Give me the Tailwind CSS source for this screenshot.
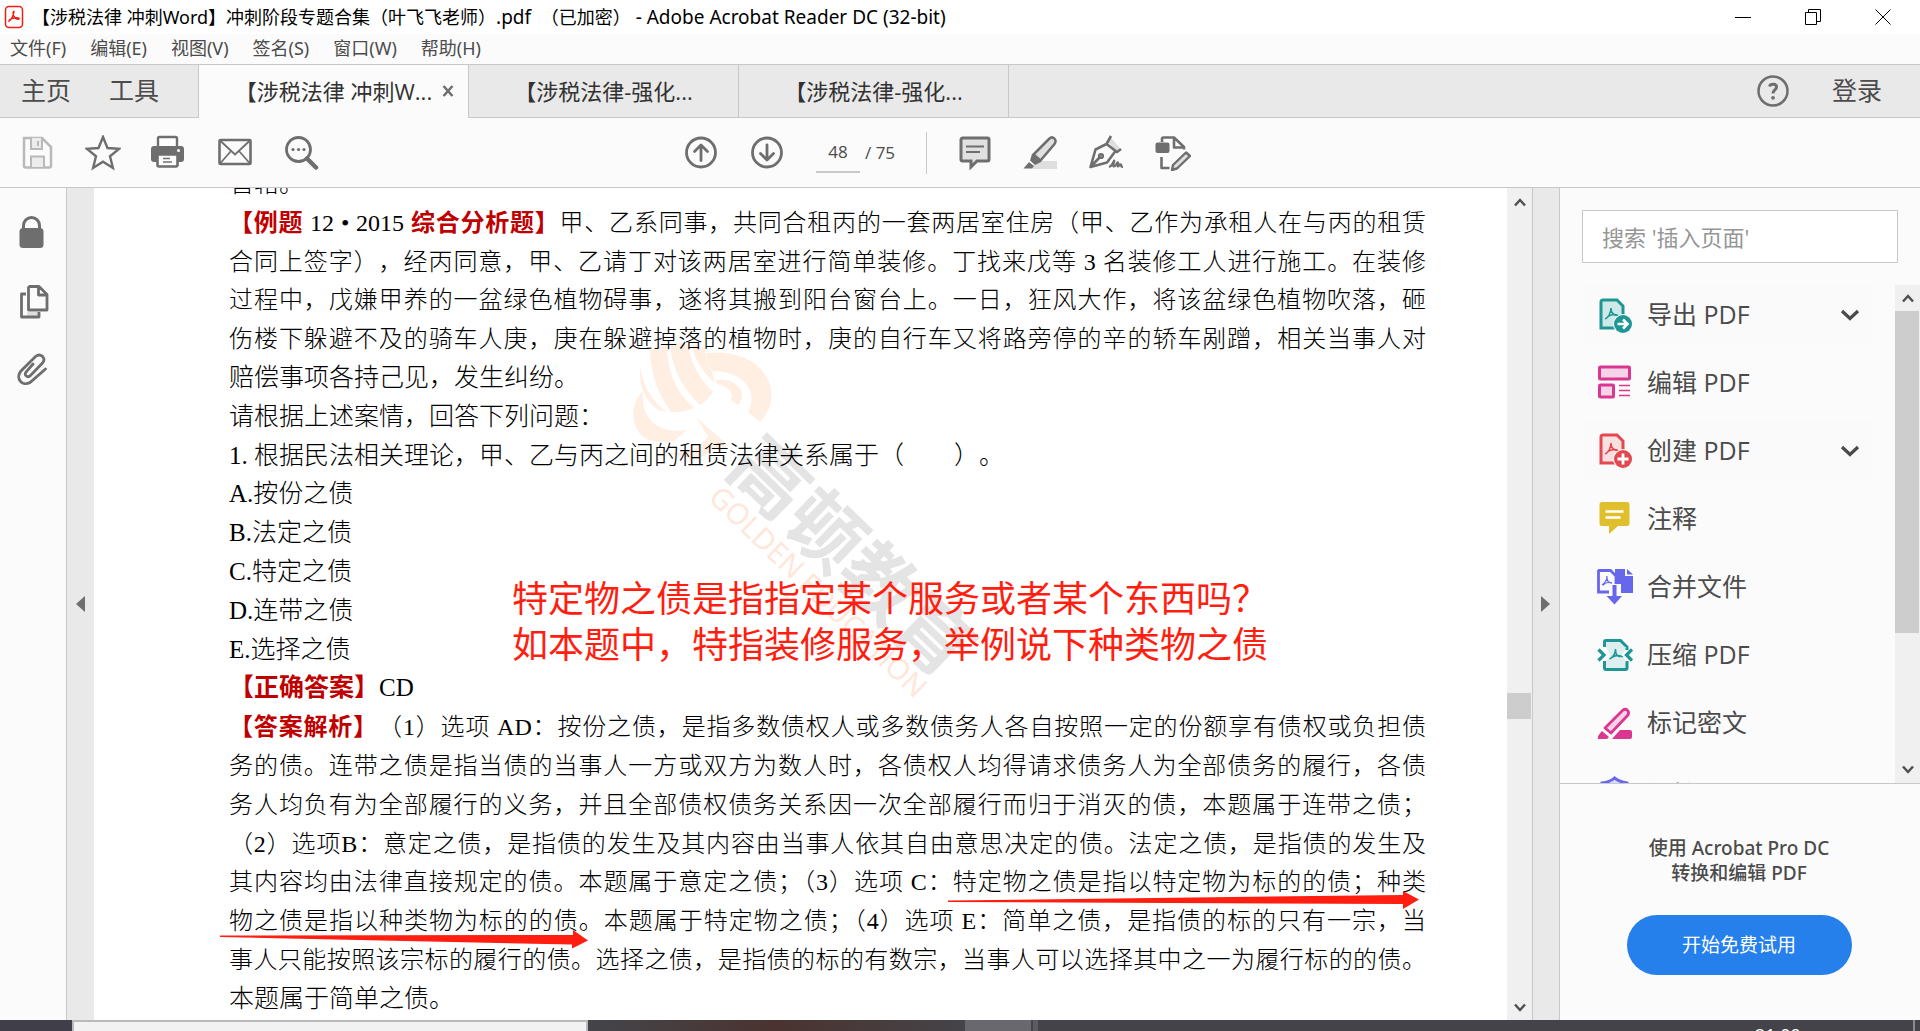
<!DOCTYPE html>
<html lang="zh-CN">
<head>
  <meta charset="UTF-8" />
  <meta name="viewport" content="width=device-width, initial-scale=1.0" />
  <title>Adobe Acrobat Reader DC (32-bit)</title>
  <script src="https://cdn.jsdelivr.net/npm/@tailwindcss/browser@4"></script>
</head>
<body class="h-screen flex flex-col overflow-hidden bg-[#fbfbfb] text-[#4b4b4b] font-['Open_Sans','Noto_Sans_CJK_SC',sans-serif]">

  <!-- Title bar -->
  <header class="h-[34px] shrink-0 flex items-center bg-white text-black">
    <svg class="ml-1 w-5 h-6 shrink-0" viewBox="0 0 20 24" fill="none" stroke="#f01e14">
      <rect x="1.5" y="1.5" width="17" height="21" rx="3.5" stroke-width="1.5" />
      <path d="M5 16c2-1 4.500-5 5-9.500c-1.500 0-1 3.500 0.500 5.500c1.500 2 3.500 3 4.500 2s-2-1.500-4.500-1s-5.500 1.500-5.500 3z" stroke-width="1.400" />
    </svg>
    <h1 class="ml-2 flex-1 text-[18px] whitespace-pre font-['Noto_Sans','Noto_Sans_CJK_SC',sans-serif]">【涉税法律 冲刺Word】冲刺阶段专题合集（叶飞飞老师）<span class="text-[19px]">.pdf </span> （已加密）<span class="text-[19px]"> - Adobe Acrobat Reader DC (32-bit)</span></h1>
    <div class="flex pr-[2px]">
      <button aria-label="最小化" class="w-[70px] h-[34px] flex items-center justify-center">
        <svg class="w-4 h-4" viewBox="0 0 16 16" stroke="#000"><path d="M0 8.500h16" /></svg>
      </button>
      <button aria-label="还原" class="w-[70px] h-[34px] flex items-center justify-center">
        <svg class="w-4 h-4" viewBox="0 0 16 16" fill="none" stroke="#000"><path d="M0.500 3.500h11v12h-11zM3.500 3.500v-3h12v12h-4" /></svg>
      </button>
      <button aria-label="关闭" class="w-[70px] h-[34px] flex items-center justify-center">
        <svg class="w-4 h-4" viewBox="0 0 16 16" stroke="#000"><path d="M0.500 0.500l15 15M15.500 0.500l-15 15" /></svg>
      </button>
    </div>
  </header>

  <!-- Menu -->
  <nav class="h-[30px] shrink-0 flex items-center gap-6 pl-[10px] text-[18px] leading-7 pb-[2px] font-['Noto_Sans','Noto_Sans_CJK_SC',sans-serif]">
    <button>文件(F)</button>
    <button>编辑(E)</button>
    <button>视图(V)</button>
    <button>签名(S)</button>
    <button>窗口(W)</button>
    <button>帮助(H)</button>
  </nav>

  <!-- Tabs -->
  <div class="h-[54px] shrink-0 flex bg-[#e9e9e9] border-t border-[#c8c8c8]">
    <div class="w-[199px] flex items-center gap-[38px] pl-[21px] text-[25px] border-r border-b border-[#c8c8c8]">
      <button>主页</button>
      <button>工具</button>
    </div>
    <div class="relative w-[269px] flex items-center justify-center bg-[#fbfbfb] text-[22px] text-[#323232]">
      <span class="whitespace-nowrap">【涉税法律 冲刺W...</span>
      <button aria-label="关闭标签" class="absolute right-3 top-[18px]">
        <svg class="w-4 h-4" viewBox="0 0 16 16" stroke="#6e6e6e" stroke-width="2.500"><path d="M3.500 3l9 10M12.500 3l-9 10" /></svg>
      </button>
    </div>
    <button class="w-[271px] border-x border-b border-[#c8c8c8] text-[22px] text-[#323232]">【涉税法律-强化...</button>
    <button class="w-[270px] border-r border-b border-[#c8c8c8] text-[22px] text-[#323232]">【涉税法律-强化...</button>
    <div class="flex-1 flex items-center justify-end gap-[43px] pr-[38px] border-b border-[#c8c8c8] text-[25px]">
      <button aria-label="帮助">
        <svg class="w-8 h-8" viewBox="0 0 32 32" fill="none" stroke="#6e6e6e">
          <circle cx="16" cy="16" r="14.500" stroke-width="2.500" />
          <path d="M12.500 11.500c1-3 7-3 7 0.500c0 3-3.500 3-3.500 6.500" stroke-width="3" />
          <circle cx="16" cy="22.800" r="1.900" fill="#6e6e6e" stroke="none" />
        </svg>
      </button>
      <button>登录</button>
    </div>
  </div>

  <!-- Toolbar -->
  <div class="h-[70px] shrink-0 flex items-center border-b border-[#c8c8c8]">
    <div class="w-[684px] flex items-center gap-[30px] pl-[19px]">
      <button aria-label="保存">
        <svg class="w-9 h-9" viewBox="0 0 36 36" fill="none" stroke="#b9b9b9" stroke-width="2.500">
          <path d="M5 3h18l9 9v19a1.500 1.500 0 0 1-1.500 1.500h-24a1.500 1.500 0 0 1-1.500-1.500z" />
          <path d="M12 3v11h11V3M19 6v5M12 32V21.500h13V32" fill="#ececec" stroke-width="2" />
        </svg>
      </button>
      <button aria-label="收藏">
        <svg class="w-9 h-9" viewBox="0 0 36 36" fill="none" stroke="#6e6e6e" stroke-width="2.400">
          <path d="M18 2l4.500 11l11.500 0.800l-9 7.500l2.900 11.700L18 26.700l-9.900 6.300l2.900-11.700l-9-7.500L13.500 13z" />
        </svg>
      </button>
      <button aria-label="打印">
        <svg class="w-9 h-9" viewBox="0 0 36 36">
          <path d="M7 12V3.500A1.500 1.500 0 0 1 8.500 2h16A1.500 1.500 0 0 1 26 3.500V12" fill="#fff" stroke="#6e6e6e" stroke-width="2.400" />
          <rect x="0" y="11" width="33" height="16" rx="3" fill="#6e6e6e" />
          <circle cx="27.500" cy="15.500" r="1.500" fill="#fff" />
          <path d="M6.500 19.500h20V30a1.500 1.500 0 0 1-1.500 1.500H8A1.500 1.500 0 0 1 6.500 30z" fill="#fff" stroke="#6e6e6e" stroke-width="2.600" />
          <path d="M12 23.500h7M12 27h9" stroke="#6e6e6e" stroke-width="1.600" />
        </svg>
      </button>
      <button aria-label="邮件">
        <svg class="w-9 h-9" viewBox="0 0 36 36" fill="none" stroke="#6e6e6e">
          <rect x="2.500" y="5" width="31" height="24" rx="1" stroke-width="2.600" />
          <path d="M3.500 6L18 19.500L32.500 6M3.500 28L14 16M32.500 28L22 16" stroke-width="1.800" />
        </svg>
      </button>
      <button aria-label="查找">
        <svg class="w-9 h-9" viewBox="0 0 36 36" fill="none" stroke="#6e6e6e">
          <circle cx="15.500" cy="14.500" r="12" stroke-width="2.800" />
          <path d="M24 23.500l9 9" stroke-width="4.500" stroke-linecap="round" />
          <g fill="#6e6e6e" stroke="none"><circle cx="10" cy="14.500" r="1.600" /><circle cx="15.500" cy="14.500" r="1.600" /><circle cx="21" cy="14.500" r="1.600" /></g>
        </svg>
      </button>
    </div>
    <div class="flex items-center gap-8">
      <button aria-label="上一页">
        <svg class="w-[34px] h-[34px]" viewBox="0 0 34 34" fill="none" stroke="#6e6e6e" stroke-width="2.800" stroke-linecap="round" stroke-linejoin="round">
          <circle cx="17" cy="16.500" r="14.500" /><path d="M17 24.500V10M10.500 15.500L17 9L23.500 15.500" />
        </svg>
      </button>
      <button aria-label="下一页">
        <svg class="w-[34px] h-[34px]" viewBox="0 0 34 34" fill="none" stroke="#6e6e6e" stroke-width="2.800" stroke-linecap="round" stroke-linejoin="round">
          <circle cx="17" cy="16.500" r="14.500" /><path d="M17 9v15M10.500 17.500l6.500 6.500L23.500 17.500" />
        </svg>
      </button>
      <div class="flex items-center text-[17px]">
        <input aria-label="页码" value="48" class="w-[44px] h-10 text-center border-b-2 border-[#c8c8c8]" />
        <span class="ml-[5px] whitespace-nowrap">/ 75</span>
      </div>
    </div>
    <div class="ml-[31px] w-px h-[42px] bg-[#c8c8c8]"></div>
    <div class="ml-[30px] flex items-center gap-[30px]">
      <button aria-label="附注">
        <svg class="w-9 h-9" viewBox="0 0 36 36" fill="#e0e0e0" stroke="#6e6e6e">
          <path d="M5.500 3h25A1.500 1.500 0 0 1 32 4.500v20a1.500 1.500 0 0 1-1.500 1.500H20l-6 6V26H5.500A1.500 1.500 0 0 1 4 24.500v-20A1.500 1.500 0 0 1 5.500 3z" stroke-width="3" />
          <path d="M9 11.500h18M9 17h14" stroke-width="1.800" />
        </svg>
      </button>
      <button aria-label="高亮">
        <svg class="w-9 h-9" viewBox="0 0 36 36">
          <path d="M14 26h20v8H8z" fill="#dedede" />
          <path d="M26.500 3.500c3-3 8 1 5 5.500L17.500 25.500l-7-6z" fill="#e0e0e0" stroke="#6e6e6e" stroke-width="2.500" />
          <path d="M9 19l9 8l-6 3l-5-4.500zM6 27l5 4l-2 2.500H0.500z" fill="#6e6e6e" />
        </svg>
      </button>
      <button aria-label="签名">
        <svg class="w-9 h-9" viewBox="0 0 36 36" fill="none" stroke="#6e6e6e" stroke-width="2.600" stroke-linejoin="round">
          <path d="M22 3l9 10l-4 3l-8-9z" fill="#dedede" stroke="none" />
          <path d="M22 1l-4.500 8L28 17l4-3M17.500 9L6.500 14.500L1.500 32l16.500-4.500L26.500 16M1.500 32L11 22" />
          <circle cx="12" cy="21" r="1.800" />
          <path d="M20 32c3-1 5-6 5-6.500c1 0-2 6 0 6s3-5 4-4s-1 4 0 4s2-3 3-2s-1 2.500 2 2.500" stroke-width="2.200" />
        </svg>
      </button>
      <button aria-label="更多工具">
        <svg class="w-9 h-9" viewBox="0 0 36 36" fill="none" stroke="#6e6e6e" stroke-width="2.600" stroke-linejoin="round">
          <path d="M7 7V4A1.500 1.500 0 0 1 8.500 2.500H19l10 9.500v2.500M19 2.500v10h10M6.500 22v11h8" />
          <rect x="0.500" y="7.500" width="14" height="10.500" rx="2" fill="#6e6e6e" stroke="none" />
          <path d="M31 17.500l4 3.500l-13 12.500l-5 1.500l1-5z" fill="#dedede" stroke-width="2.400" />
        </svg>
      </button>
    </div>
  </div>

  <div class="flex-1 min-h-0 flex">
    <!-- Left rail -->
    <aside class="w-[67px] shrink-0 flex flex-col items-center pr-1 pt-[26px] gap-[33px] border-r border-[#c8c8c8]">
      <button aria-label="安全性">
        <svg class="w-9 h-9" viewBox="0 0 36 36">
          <path d="M10.500 17v-5.500a8 8 0 0 1 16 0V17" fill="none" stroke="#6e6e6e" stroke-width="3" />
          <rect x="6.500" y="14" width="24" height="20" rx="3.500" fill="#6e6e6e" />
        </svg>
      </button>
      <button aria-label="页面缩略图">
        <svg class="w-9 h-9" viewBox="0 0 36 36" fill="none" stroke="#6e6e6e" stroke-width="2.800" stroke-linejoin="round">
          <path d="M14 29h11v4H14z" fill="#dedede" stroke="none" />
          <path d="M16.500 3.500H26l8 8v15.500H15.500V4.500zM25.500 4v8H34M13 11H8.500v23h17.500v-5" />
        </svg>
      </button>
      <button aria-label="附件">
        <svg class="w-9 h-9" viewBox="0 0 36 36" fill="none" stroke="#6e6e6e" stroke-width="2.800" stroke-linecap="round">
          <path d="M20 12l-7 8c-2 3 1 6 4 4L29.500 11c4-5-2-10.500-7-6.500L8 19c-6 7 1 16 9 11.500L32.500 17" />
        </svg>
      </button>
    </aside>
    <button aria-label="折叠导航窗格" class="w-[27px] shrink-0 flex items-center justify-center bg-[#e9e9e9]">
      <svg class="w-[10px] h-4" viewBox="0 0 10 16"><path d="M9 0v16L0 8z" fill="#6e6e6e" /></svg>
    </button>

    <!-- Document page -->
    <main class="relative flex-1 min-w-0 overflow-hidden bg-white">
      <svg class="absolute left-0 top-0 w-[1000px] h-[600px]" viewBox="94 188 1000 600">
        <g fill="#ffeee2">
          <path d="M650 350Q659 345 667 345Q667 385 694 408Q683 413 671 412Q651 385 650 350z" />
          <path d="M670 345Q680 342 688 344Q692 372 713 392Q708 400 700 405Q673 380 670 345z" />
          <path d="M691 344Q700 344 705 350Q706 362 712 372L715 383Q696 366 691 344z" />
          <path d="M640 367Q645 397 667 412L658 410Q638 395 640 367z" />
          <path d="M706 353Q740 350 760 368C776 386 775 406 760 422L748 412C757 396 750 372 712 371Q707 363 706 353z" />
          <path d="M716 380C734 377 750 392 738 405L731 400Q735 388 717 384z" />
          <path d="M643 391C628 406 632 430 645 438Q657 444 674 441L687 430C664 434 640 424 643 391z" />
          <path d="M697 418L728 445L722 451L712 448Q704 460 690 459L670 453Q694 454 704 441L708 437z" />
        </g>
        <g text-anchor="middle">
          <text transform="translate(852 557) rotate(44)" y="27" font-size="76" fill="#e4e4e4" font-weight="700">高顿教育</text>
          <text transform="translate(818 592) rotate(44)" y="10" font-size="29" fill="#ffe6d8">GOLDEN EDUCATION</text>
        </g>
      </svg>

      <article class="relative -mt-[23px] h-[853px] pl-[135px] pr-[81px] flex flex-col justify-between text-[25px] leading-[38px] whitespace-nowrap text-black font-light font-['Liberation_Serif','Noto_Sans_CJK_SC',serif]">
        <p>管辖。</p>
        <p class="text-[24px] [text-align-last:justify]"><b class="font-bold text-[#c00000]">【例题</b> 12 • 2015 <b class="font-bold text-[#c00000]">综合分析题】</b>甲、乙系同事，共同合租丙的一套两居室住房（甲、乙作为承租人在与丙的租赁</p>
        <p class="text-[24px] [text-align-last:justify] [text-spacing-trim:space-all]">合同上签字），经丙同意，甲、乙请丁对该两居室进行简单装修。丁找来戊等 3 名装修工人进行施工。在装修</p>
        <p class="text-[24px] [text-align-last:justify]">过程中，戊嫌甲养的一盆绿色植物碍事，遂将其搬到阳台窗台上。一日，狂风大作，将该盆绿色植物吹落，砸</p>
        <p class="text-[24px] [text-align-last:justify]">伤楼下躲避不及的骑车人庚，庚在躲避掉落的植物时，庚的自行车又将路旁停的辛的轿车剐蹭，相关当事人对</p>
        <p>赔偿事项各持己见，发生纠纷。</p>
        <p>请根据上述案情，回答下列问题：</p>
        <p class="[text-spacing-trim:space-all]">1. 根据民法相关理论，甲、乙与丙之间的租赁法律关系属于（　　）。</p>
        <p>A.按份之债</p>
        <p>B.法定之债</p>
        <p>C.特定之债</p>
        <p>D.连带之债</p>
        <p>E.选择之债</p>
        <p><b class="font-bold text-[#c00000]">【正确答案】</b>CD</p>
        <p class="text-[24px] [text-align-last:justify] [text-spacing-trim:space-all]"><b class="font-bold text-[#c00000]">【答案解析】</b>（1）选项 AD：按份之债，是指多数债权人或多数债务人各自按照一定的份额享有债权或负担债</p>
        <p class="text-[24px] [text-align-last:justify]">务的债。连带之债是指当债的当事人一方或双方为数人时，各债权人均得请求债务人为全部债务的履行，各债</p>
        <p class="text-[24px] [text-align-last:justify]">务人均负有为全部履行的义务，并且全部债权债务关系因一次全部履行而归于消灭的债，本题属于连带之债；</p>
        <p class="text-[24px] [text-align-last:justify]">（2）选项B：意定之债，是指债的发生及其内容由当事人依其自由意思决定的债。法定之债，是指债的发生及</p>
        <p class="text-[24px] [text-align-last:justify]">其内容均由法律直接规定的债。本题属于意定之债；（3）选项 C：特定物之债是指以特定物为标的的债；种类</p>
        <p class="text-[24px] [text-align-last:justify]">物之债是指以种类物为标的的债。本题属于特定物之债；（4）选项 E：简单之债，是指债的标的只有一宗，当</p>
        <p class="text-[24px] [text-align-last:justify]">事人只能按照该宗标的履行的债。选择之债，是指债的标的有数宗，当事人可以选择其中之一为履行标的的债。</p>
        <p>本题属于简单之债。</p>
      </article>

      <!-- Annotations -->
      <p class="absolute left-[418px] top-[385px] text-[36px] leading-[46px] whitespace-nowrap text-[#ff1e10] font-['Noto_Sans_CJK_SC',sans-serif]">特定物之债是指指定某个服务或者某个东西吗？<br>如本题中，特指装修服务，举例说下种类物之债</p>
      <svg class="absolute left-0 top-[688px] w-[1400px] h-[80px]" viewBox="94 876 1400 80" fill="#ff1e10">
        <path d="M948 900.500L1403 895v-4l16 8.500l-16 9.500v-5L948 902z" />
        <path d="M220 935.500L573 935v-5l15 10.500l-16 8v-4L220 937z" />
      </svg>
    </main>

    <!-- Document scrollbar -->
    <div class="w-[26px] shrink-0 flex flex-col items-center justify-between pt-2 pb-[6px] bg-[#f0f0f0] border-r border-[#c8c8c8] relative">
      <svg class="w-3 h-3" viewBox="0 0 12 12" fill="none" stroke="#505050" stroke-width="2.500"><path d="M1 9.500l5-5.500l5 5.500" /></svg>
      <div class="absolute left-0 right-px top-[505px] h-[26px] bg-[#cdcdcd]"></div>
      <svg class="w-3 h-3" viewBox="0 0 12 12" fill="none" stroke="#505050" stroke-width="2.500"><path d="M1 2.500l5 5.500l5-5.500" /></svg>
    </div>
    <button aria-label="折叠工具窗格" class="w-[26px] shrink-0 flex items-center justify-center bg-[#e9e9e9]">
      <svg class="w-[10px] h-4" viewBox="0 0 10 16"><path d="M0 0v16l9-8z" fill="#6e6e6e" /></svg>
    </button>

    <!-- Tools pane -->
    <aside class="w-[361px] shrink-0 flex flex-col border-l border-[#c8c8c8]">
      <div class="pt-[22px] px-[22px]">
        <input type="text" aria-label="搜索工具" placeholder="搜索 '插入页面'" class="w-full h-[53px] px-[19px] bg-white border border-[#c8c8c8] text-[22px] placeholder:text-[#959595]" />
      </div>
      <div class="mt-[22px] h-[498px] flex overflow-hidden">
        <ul class="flex-1 pl-[23px] pr-[23px] flex flex-col gap-2 text-[25px]">
          <li class="h-[60px] shrink-0 bg-[#fafafa]">
            <button class="w-full h-full flex items-center pl-[14px] gap-[14px] text-left">
              <svg class="w-9 h-9" viewBox="0 0 36 36">
                <path d="M6 3h14l6 6v22H4V5q0-2 2-2z" fill="#cfe8e8" stroke="#1e9696" stroke-width="3" />
                <path d="M8 22c3-1 6-6 6-11M14 11c0 5 3 8 7 7.500c-3-2-9-1-12 3" fill="none" stroke="#1e9696" stroke-width="1.500" />
                <circle cx="26" cy="27" r="10" fill="#fafafa" /><circle cx="26" cy="27" r="9" fill="#1e9696" />
                <path d="M20.500 27h9M26 22.500l4.500 4.500l-4.500 4.500" fill="none" stroke="#fff" stroke-width="2.600" />
              </svg>
              <span class="flex-1">导出 PDF</span>
              <svg class="mr-3 w-5 h-3" viewBox="0 0 20 12" fill="none" stroke="#4b4b4b" stroke-width="3.200"><path d="M2 2l8 7.500L18 2" /></svg>
            </button>
          </li>
          <li class="h-[60px] shrink-0">
            <button class="w-full h-full flex items-center pl-[14px] gap-[14px] text-left">
              <svg class="w-9 h-9" viewBox="0 0 36 36" fill="#f6d3e8" stroke="#da3790" stroke-width="3">
                <rect x="2.500" y="2" width="30" height="12" rx="1" /><rect x="2.500" y="20" width="14" height="12" rx="1" />
                <path d="M22 20.500h11M22 25.500h11M22 30.500h11" stroke-width="1.600" />
              </svg>
              <span class="flex-1">编辑 PDF</span>
            </button>
          </li>
          <li class="h-[60px] shrink-0 bg-[#fafafa]">
            <button class="w-full h-full flex items-center pl-[14px] gap-[14px] text-left">
              <svg class="w-9 h-9" viewBox="0 0 36 36">
                <path d="M6 2h14l6 6v22H4V4q0-2 2-2z" fill="#f8dfe0" stroke="#e34850" stroke-width="3" />
                <path d="M8 21c3-1 6-6 6-11M14 10c0 5 3 8 7 7.500c-3-2-9-1-12 3" fill="none" stroke="#e34850" stroke-width="1.500" />
                <circle cx="26" cy="26" r="10" fill="#fafafa" /><circle cx="26" cy="26" r="9" fill="#e34850" />
                <path d="M20.500 26h11M26 20.500v11" fill="none" stroke="#fff" stroke-width="2.800" />
              </svg>
              <span class="flex-1">创建 PDF</span>
              <svg class="mr-3 w-5 h-3" viewBox="0 0 20 12" fill="none" stroke="#4b4b4b" stroke-width="3.200"><path d="M2 2l8 7.500L18 2" /></svg>
            </button>
          </li>
          <li class="h-[60px] shrink-0">
            <button class="w-full h-full flex items-center pl-[14px] gap-[14px] text-left">
              <svg class="w-9 h-9" viewBox="0 0 36 36">
                <path d="M5 1h25a2.500 2.500 0 0 1 2.500 2.500v19A2.500 2.500 0 0 1 30 25h-9l-9 8v-8H5a2.500 2.500 0 0 1-2.500-2.500v-19A2.500 2.500 0 0 1 5 1z" fill="#dfbf2c" />
                <path d="M8.500 10.500h18M8.500 16.500h15" stroke="#fff" stroke-width="2.400" />
              </svg>
              <span class="flex-1">注释</span>
            </button>
          </li>
          <li class="h-[60px] shrink-0">
            <button class="w-full h-full flex items-center pl-[14px] gap-[14px] text-left">
              <svg class="w-9 h-9" viewBox="0 0 36 36">
                <path d="M18 0h10v7h8v17H18z" fill="#6767ec" /><path d="M30 0l6 5.500h-6z" fill="#6767ec" />
                <path d="M2 1.500h11.500L19 7v16H1.500V2z" fill="#fbfbfb" stroke="#6767ec" stroke-width="2.800" />
                <path d="M5 16c3-2 5-5 5-9M10 9c0 4 2 5 5 5c-3-1-7 0-9 2" fill="none" stroke="#6767ec" stroke-width="1.300" />
                <path d="M12 15h12v10h5l-11.500 11L6 25h6z" fill="#fbfbfb" />
                <path d="M15.500 16h4v11h5.500l-7.500 8.500L9.500 27h6z" fill="#6767ec" />
              </svg>
              <span class="flex-1">合并文件</span>
            </button>
          </li>
          <li class="h-[60px] shrink-0">
            <button class="w-full h-full flex items-center pl-[14px] gap-[14px] text-left">
              <svg class="w-9 h-9" viewBox="0 0 36 36" fill="none" stroke="#1e9696">
                <path d="M7.500 10V5Q7.500 3.500 9 3.500h14.500L30 10v3M7.500 24v7q0 1.500 1.500 1.500h19.500q1.500 0 1.500-1.500v-7" fill="#dceeee" stroke-width="3" />
                <path d="M9 10h20l-4 8l4 7H9l4-7z" fill="#dceeee" stroke="none" />
                <path d="M1.500 12.500l5.500 5.500l-5.500 5.500M35 12.500L29.500 18l5.500 5.500" stroke-width="3.200" />
                <path d="M12.500 22c3-1 6-5 6-10M18.500 13c0 4 2 7 6 6.500c-3-2-8-1-11 2" stroke-width="1.600" />
              </svg>
              <span class="flex-1">压缩 PDF</span>
            </button>
          </li>
          <li class="h-[60px] shrink-0">
            <button class="w-full h-full flex items-center pl-[14px] gap-[14px] text-left">
              <svg class="w-9 h-9" viewBox="0 0 36 36">
                <path d="M26 5c3-2 7 1 5 5L14 28l-6-5z" fill="#f6d3e8" stroke="#da3790" stroke-width="2.800" stroke-linejoin="round" />
                <path d="M5 26l7 6l-2 2H1q-1-3 4-8zM23 25h10q2 0 2 2v5q0 2-2 2H15z" fill="#da3790" />
              </svg>
              <span class="flex-1">标记密文</span>
            </button>
          </li>
          <li class="h-[60px] shrink-0">
            <button class="w-full h-full flex items-center pl-[14px] gap-[14px] text-left">
              <svg class="w-9 h-9" viewBox="0 0 36 36"><path d="M17.500 5q5 4 12.500 5v9q0 9-12.500 15Q5 28 5 19V10q8-1 12.500-5z" fill="#dcdcf8" stroke="#6767ec" stroke-width="3" /></svg>
              <span class="flex-1 pt-2">保护</span>
            </button>
          </li>
        </ul>
        <div class="w-[25px] flex flex-col items-center bg-[#f0f0f0]">
          <svg class="my-[7px] w-3 h-3 shrink-0" viewBox="0 0 12 12" fill="none" stroke="#505050" stroke-width="2.500"><path d="M1 9.500l5-5.500l5 5.500" /></svg>
          <div class="mr-px w-6 h-[322px] bg-[#cdcdcd]"></div>
          <svg class="mt-auto mb-[7px] w-3 h-3 shrink-0" viewBox="0 0 12 12" fill="none" stroke="#505050" stroke-width="2.500"><path d="M1 2.500l5 5.500l5-5.500" /></svg>
        </div>
      </div>
      <div class="flex-1 flex flex-col items-center pt-[52px] pr-[2px] border-t border-[#c8c8c8]">
        <p class="text-center text-[19px] leading-[25px] font-medium font-['Noto_Sans','Noto_Sans_CJK_SC',sans-serif]">使用 Acrobat Pro DC<br>转换和编辑 PDF</p>
        <button class="mt-[29px] w-[225px] h-[60px] rounded-full bg-[#2680eb] text-white text-[19px]">开始免费试用</button>
      </div>
    </aside>
  </div>

  <!-- Taskbar -->
  <footer class="h-[11px] shrink-0 flex bg-[#434349] overflow-hidden">
    <div class="w-[72px] bg-[#403e49]"></div>
    <div class="w-[516px] bg-[#f2f2f2] border-2 border-b-0 border-[#bababa]"></div>
    <div class="w-[377px] bg-linear-to-r from-[#43454a] via-[#4a3330] to-[#444449]"></div>
    <div class="w-[66px] bg-[#69686e]"></div>
    <div class="ml-[2px] w-[5px] bg-[#5c5b62]"></div>
    <div class="flex-1 pl-[717px] pt-1 text-[18px] leading-[22px] text-white">21:09</div>
    <div class="mr-[5px] w-[2px] bg-[#8b8b90]"></div>
  </footer>
</body>
</html>
